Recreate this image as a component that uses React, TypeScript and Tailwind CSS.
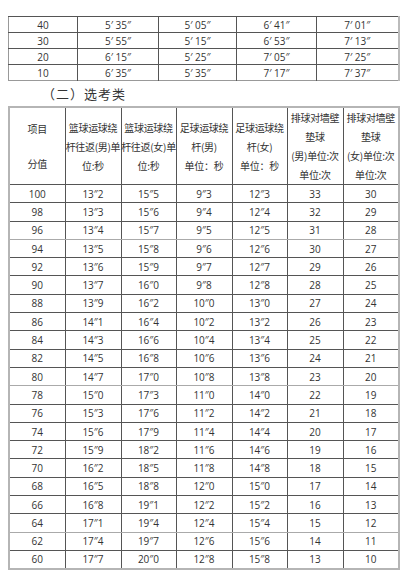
import React from "react";

const topRows = [
  ["40", "5′ 35″", "5′ 05″", "6′ 41″", "7′ 01″"],
  ["30", "5′ 55″", "5′ 15″", "6′ 53″", "7′ 13″"],
  ["20", "6′ 15″", "5′ 25″", "7′ 05″", "7′ 25″"],
  ["10", "6′ 35″", "5′ 35″", "7′ 17″", "7′ 37″"],
];
const topWidths = ["w-[69px]", "w-[81px]", "w-[78px]", "w-[80px]", "w-[82px]"];

const headers: string[][] = [
  ["项目", "分值"],
  ["篮球运球绕", "杆往返(男)单", "位:秒"],
  ["篮球运球绕", "杆往返(女)单", "位:秒"],
  ["足球运球绕", "杆(男)", "单位：秒"],
  ["足球运球绕", "杆(女)", "单位：秒"],
  ["排球对墙壁", "垫球", "(男)单位:次", "单位:次"],
  ["排球对墙壁", "垫球", "(女)单位:次", "单位:次"],
];
const widths = ["w-[56px]", "w-[56px]", "w-[55px]", "w-[56px]", "w-[55px]", "w-[56px]", "w-[56px]"];

const data = [
  ["100", "13″2", "15″5", "9″3", "12″3", "33", "30"],
  ["98", "13″3", "15″6", "9″4", "12″4", "32", "29"],
  ["96", "13″4", "15″7", "9″5", "12″5", "31", "28"],
  ["94", "13″5", "15″8", "9″6", "12″6", "30", "27"],
  ["92", "13″6", "15″9", "9″7", "12″7", "29", "26"],
  ["90", "13″7", "16″0", "9″8", "12″8", "28", "25"],
  ["88", "13″9", "16″2", "10″0", "13″0", "27", "24"],
  ["86", "14″1", "16″4", "10″2", "13″2", "26", "23"],
  ["84", "14″3", "16″6", "10″4", "13″4", "25", "22"],
  ["82", "14″5", "16″8", "10″6", "13″6", "24", "21"],
  ["80", "14″7", "17″0", "10″8", "13″8", "23", "20"],
  ["78", "15″0", "17″3", "11″0", "14″0", "22", "19"],
  ["76", "15″3", "17″6", "11″2", "14″2", "21", "18"],
  ["74", "15″6", "17″9", "11″4", "14″4", "20", "17"],
  ["72", "15″9", "18″2", "11″6", "14″6", "19", "16"],
  ["70", "16″2", "18″5", "11″8", "14″8", "18", "15"],
  ["68", "16″5", "18″8", "12″0", "15″0", "17", "14"],
  ["66", "16″8", "19″1", "12″2", "15″2", "16", "13"],
  ["64", "17″1", "19″4", "12″4", "15″4", "15", "12"],
  ["62", "17″4", "19″7", "12″6", "15″6", "14", "11"],
  ["60", "17″7", "20″0", "12″8", "15″8", "13", "10"],
];
// rows whose bottom rule is printed lighter in the scan
const lightRules = ["96", "80", "64"];

export default function App() {
  return (
    <div
      className="w-[407px] h-[577px] bg-white text-[#333] overflow-hidden"
      style={{ fontFamily: '"Open Sans", "Noto Sans CJK SC", sans-serif' }}
    >
      <div className="pt-[16px] pl-[8px]">
        <table className="table-fixed border-collapse w-[390px] text-[10px] border-l border-b border-[#999] border-r-2 border-r-[#bbb]">
          <tbody>
            {topRows.map((row, i) => (
              <tr key={i} className="h-[16px]">
                {row.map((cell, j) => (
                  <td
                    key={j}
                    className={`${topWidths[j]} border-t border-[#555] text-center align-bottom leading-[14px] p-0 ${j > 0 ? "border-l border-l-[#555]" : ""}`}
                  >
                    {cell}
                  </td>
                ))}
              </tr>
            ))}
          </tbody>
        </table>
      </div>

      <div
        className="h-[25px] pl-[42px] flex items-center text-[13px] tracking-[1px] text-[#333]"
        style={{ fontFamily: '"Noto Sans CJK SC", sans-serif' }}
      >
        （二）选考类
      </div>

      <div className="pl-[8px]">
        <table className="table-fixed border-collapse w-[390px] text-[10px] border-2 border-[#b5b5b5]">
          <thead>
            <tr className="h-[76px]">
              {headers.map((lines, j) => (
                <th
                  key={j}
                  className={`${widths[j]} font-normal text-center align-middle p-0 border-b border-[#555] ${j > 0 ? "border-l border-l-[#555]" : ""}`}
                  style={{ fontFamily: '"Noto Sans CJK SC", sans-serif' }}
                >
                  <div className={`flex flex-col items-center whitespace-nowrap ${lines.length === 2 ? "gap-[16px]" : ""} leading-[19px] tracking-[-0.3px]`}>
                    {lines.map((l, k) => (
                      <span key={k}>{l}</span>
                    ))}
                  </div>
                </th>
              ))}
            </tr>
          </thead>
          <tbody>
            {data.map((row, i) => (
              <tr key={i} className="h-[18.3px]">
                {row.map((cell, j) => (
                  <td
                    key={j}
                    className={`text-center align-middle leading-[12px] p-0 ${
                      lightRules.includes(row[0]) ? "border-b border-b-[#aaa]" : "border-b border-b-[#555]"
                    } ${j > 0 ? "border-l border-l-[#555]" : ""}`}
                  >
                    {cell}
                  </td>
                ))}
              </tr>
            ))}
          </tbody>
        </table>
      </div>
    </div>
  );
}
